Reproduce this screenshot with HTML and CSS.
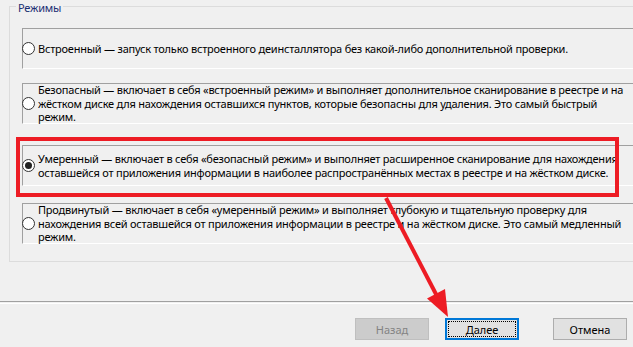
FILE: index.html
```html
<!DOCTYPE html>
<html lang="ru">
<head>
<meta charset="utf-8">
<title>Режимы</title>
<link rel="stylesheet" href="styles.css">
</head>
<body>
<div class="page">
  <div class="group">
    <div class="group-title">Режимы</div>
    <div class="opt opt-1">
      <span class="radio"></span>
      <span class="label">Встроенный — запуск только встроенного деинсталлятора без какой-либо дополнительной проверки.</span>
    </div>
    <div class="opt opt-2">
      <span class="radio"></span>
      <span class="label">Безопасный — включает в себя «встроенный режим» и выполняет дополнительное сканирование в реестре и на<br>жёстком диске для нахождения оставшихся пунктов, которые безопасны для удаления. Это самый быстрый<br>режим.</span>
    </div>
    <div class="opt opt-3">
      <span class="radio checked"></span>
      <span class="label">Умеренный — включает в себя «безопасный режим» и выполняет расширенное сканирование для нахождения<br>оставшейся от приложения информации в наиболее распространённых местах в реестре и на жёстком диске.</span>
    </div>
    <div class="opt opt-4">
      <span class="radio"></span>
      <span class="label">Продвинутый — включает в себя «умеренный режим» и выполняет глубокую и тщательную проверку для<br>нахождения всей оставшейся от приложения информации в реестре и на жёстком диске. Это самый медленный<br>режим.</span>
    </div>
  </div>
  <div class="separator"></div>
  <div class="buttons">
    <button class="btn btn-back" disabled>Назад</button>
    <button class="btn btn-next">Далее</button>
    <button class="btn btn-cancel">Отмена</button>
  </div>
  <svg class="annot" width="633" height="347" viewBox="0 0 633 347">
    <rect x="18" y="139" width="599" height="56" fill="none" stroke="#ed1c24" stroke-width="4"/>
    <line x1="386" y1="198" x2="438" y2="298" stroke="#ed1c24" stroke-width="4"/>
    <polygon points="448,317 445,289 427,298.5" fill="#ed1c24"/>
  </svg>
</div>
</body>
</html>
```

FILE: styles.css
```css
html, body {
  margin: 0;
  padding: 0;
}
body {
  width: 633px;
  height: 347px;
  overflow: hidden;
  background: #f0f0f0;
  font-family: "Noto Sans", "Open Sans", sans-serif;
  font-size: 11px;
  color: #000;
}
.page {
  position: relative;
  width: 633px;
  height: 347px;
  display: flex;
  flex-direction: column;
  overflow: hidden;
}
.group {
  position: relative;
  margin: 6px 0 0 9px;
  width: 660px;
  height: 256px;
  box-sizing: border-box;
  border: 1px solid #dcdcdc;
  padding: 21px 0 0 12px;
  display: flex;
  flex-direction: column;
  flex-shrink: 0;
}
.group-title {
  position: absolute;
  top: -6px;
  left: 6px;
  padding: 0 2px;
  background: #f0f0f0;
  color: #1c2f73;
  line-height: 13px;
  letter-spacing: -0.2px;
}
.opt {
  box-sizing: border-box;
  height: 41px;
  border-top: 1px solid #a0a0a0;
  border-left: 1px solid #a0a0a0;
  border-bottom: 1px solid #ffffff;
  display: flex;
  align-items: center;
  flex-shrink: 0;
}
.opt-2 { margin-top: 14px; }
.opt-3 { margin-top: 21px; }
.opt-4 { margin-top: 17px; }
.radio {
  box-sizing: border-box;
  width: 13px;
  height: 13px;
  margin-left: -1px;
  border: 1px solid #333;
  border-radius: 50%;
  background: #fff;
  flex-shrink: 0;
  display: flex;
  align-items: center;
  justify-content: center;
}
.radio.checked::after {
  content: "";
  width: 7px;
  height: 7px;
  border-radius: 50%;
  background: #222;
}
.label {
  margin-left: 3px;
  line-height: 13.5px;
  white-space: nowrap;
  letter-spacing: -0.22px;
}
.separator {
  margin-top: 39px;
  height: 1px;
  border-top: 1px solid #a0a0a0;
  border-bottom: 1px solid #ffffff;
  flex-shrink: 0;
}
.buttons {
  margin-top: 14px;
  display: flex;
  justify-content: flex-end;
  padding-right: 6px;
}
.btn {
  box-sizing: border-box;
  width: 74px;
  height: 22px;
  padding: 0;
  font-family: "Noto Sans", "Open Sans", sans-serif;
  font-size: 11px;
  background: #e1e1e1;
  border: 1px solid #adadad;
  color: #000;
}
.btn-back {
  background: #cccccc;
  border-color: #bfbfbf;
  color: #838383;
}
.btn-next {
  margin-left: 16px;
  border: 2px solid #0078d7;
  outline: 1px dotted #000;
  outline-offset: -4px;
}
.btn-cancel {
  margin-left: 34px;
}
.annot {
  position: absolute;
  left: 0;
  top: 0;
  pointer-events: none;
}
```
